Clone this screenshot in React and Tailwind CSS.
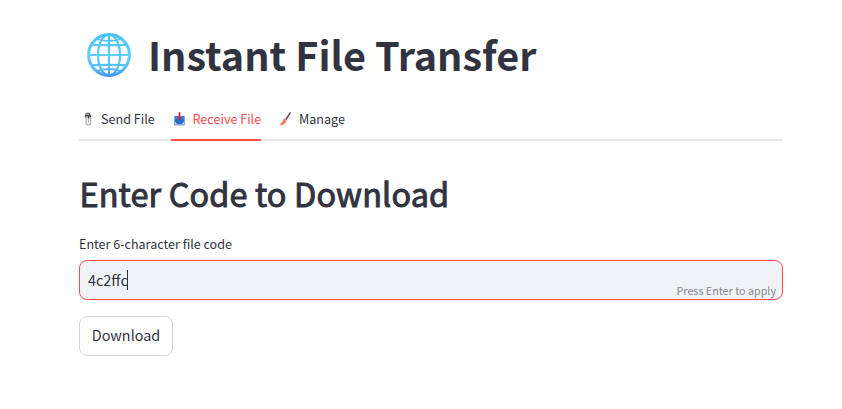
const FONT = "font-['Noto_Sans_CJK_SC','Open_Sans',sans-serif]";

function Globe() {
  return (
    <svg viewBox="0 0 44 44" className="-mt-px h-[44px] w-[44px] shrink-0" fill="none">
      <defs>
        <linearGradient id="globe" x1="0" y1="0" x2="0" y2="44" gradientUnits="userSpaceOnUse">
          <stop offset="0" stopColor="#48c2f3" />
          <stop offset="0.5" stopColor="#5fceff" />
          <stop offset="0.8" stopColor="#58bdfb" />
          <stop offset="1" stopColor="#4292e6" />
        </linearGradient>
      </defs>
      <g stroke="url(#globe)" strokeWidth="2.200">
        <circle cx="22" cy="22" r="20.4" strokeWidth="3" />
        <ellipse cx="22" cy="22" rx="11" ry="20.4" />
        <path d="M22 1.5V42.500L22.010 1.5" />
        <path d="M1.500 22H42.500L1.500 22.010" />
        <path d="M5 11.900Q22 12.300 39 11.900M5 32.100Q22 31.700 39 32.100" />
        <path d="M10 6Q22 10 34 6M10 38Q22 34 34 38" strokeWidth="1.800" />
      </g>
    </svg>
  );
}

function Paperclips() {
  return (
    <svg viewBox="0 0 14 16" className="h-4 w-[14px] shrink-0" fill="none" strokeLinecap="round">
      <path d="M6.500 6.500V4.300a2.200 2.200 0 0 1 4.500 0V7" stroke="#777" strokeWidth="1.300" />
      <path d="M7 5v6.500a2.300 2.300 0 0 0 4.700 0V6.500M9.300 6v5.500" stroke="#aaa" strokeWidth="1.100" />
      <path d="M6.500 5.300 8.300 4M10.200 3.500 11.300 5.500M9.300 4.700v1.800" stroke="#3d3d3d" strokeWidth="1.400" />
    </svg>
  );
}

function Inbox() {
  return (
    <svg viewBox="0 0 14 16" className="h-4 w-[14px] shrink-0">
      <path d="M4 5h9q.6 0 .7.600V11H3L3.300 5.600q.1-.6.7-.6z" fill="#3b83d8" />
      <path d="M3 5.800h1V12.500h9V5.800h1V13.600q0 1-1 1H4q-1 0-1-1z" fill="#9b9ed8" />
      <path d="M4.500 8h8v4h-1l-1 1H6.500l-1-1h-1z" fill="#246dcb" />
      <path d="M7.600 1.200h1.800v4.800h1.800L8.500 9.200 5.800 6h1.800z" fill="#d51e50" />
    </svg>
  );
}

function Brush() {
  return (
    <svg viewBox="0 0 14 16" className="h-4 w-[14px] shrink-0">
      <path d="M13.200 1.900 9 8.200" stroke="#7b4d50" strokeWidth="1.600" strokeLinecap="round" />
      <path d="M7.700 7.200 9.900 8.900 9.100 10.300 6.700 8.500z" fill="#a88c91" />
      <path d="M6.700 8.200 9.300 10.100Q8.300 14 3.500 14.500L3.800 13.700 2.600 13.800Q5.500 11.500 6.700 8.200z" fill="#f47b50" />
    </svg>
  );
}

function Tab({ icon, label, active, width, gap }) {
  return (
    <button
      className={`flex h-10 shrink-0 items-center whitespace-nowrap border-b-2 pb-[2px] text-[12.600px] leading-5 ${width} ${gap} ${
        active ? "border-[#ff4b4b] text-[#ff4b4b]" : "border-transparent text-[#31333f]"
      }`}
    >
      {icon}
      <span>{label}</span>
    </button>
  );
}

export default function App() {
  return (
    <main className={`h-[409px] w-[842px] overflow-hidden bg-white pl-[79px] pr-[59px] pt-[29px] text-[#31333f] ${FONT}`}>
      <h1 className="flex h-[53px] items-center whitespace-nowrap pl-[7.500px] text-[39.600px] font-bold leading-[53px]">
        <Globe />
        <span className="-mt-[4px] ml-[17.500px]">Instant File Transfer</span>
      </h1>

      <nav className="mt-[19px] flex h-[40px] gap-4 shadow-[inset_0_-2px_0_#e8e8ea]">
        <Tab icon={<Paperclips />} label="Send File" width="w-[76px]" gap="gap-[8px]" />
        <Tab icon={<Inbox />} label="Receive File" active width="w-[90px]" gap="gap-[7.500px]" />
        <Tab icon={<Brush />} label="Manage" width="w-[70px]" gap="gap-[8px]" />
      </nav>

      <h2 className="mt-[30px] h-[45px] whitespace-nowrap pl-[0.500px] text-[32.400px] font-normal leading-[43px] tracking-[0.140px] [-webkit-text-stroke:1px_#31333f]">
        Enter Code to Download
      </h2>

      <label className="mt-[18px] block h-[20px] text-[12.550px] leading-[20px]">Enter 6-character file code</label>
      <div className="mt-[6px] flex h-[40px] items-center justify-between rounded-lg border border-[#ff4b4b] bg-[#f0f2f6] pl-2 pr-[6px]">
        <div className="flex items-center text-[14.400px] leading-5">
          <span>4c2ffc</span>
          <span className="-ml-px h-5 w-px bg-[#31333f]" />
        </div>
        <span className="self-end text-[10.750px] leading-4 text-[#868892]">Press Enter to apply</span>
      </div>

      <button className="mt-[16px] flex h-10 w-[94px] items-center justify-center rounded-lg border border-[#d6d6d9] bg-white pb-[2px] text-[14.400px] leading-6">
        Download
      </button>
    </main>
  );
}
